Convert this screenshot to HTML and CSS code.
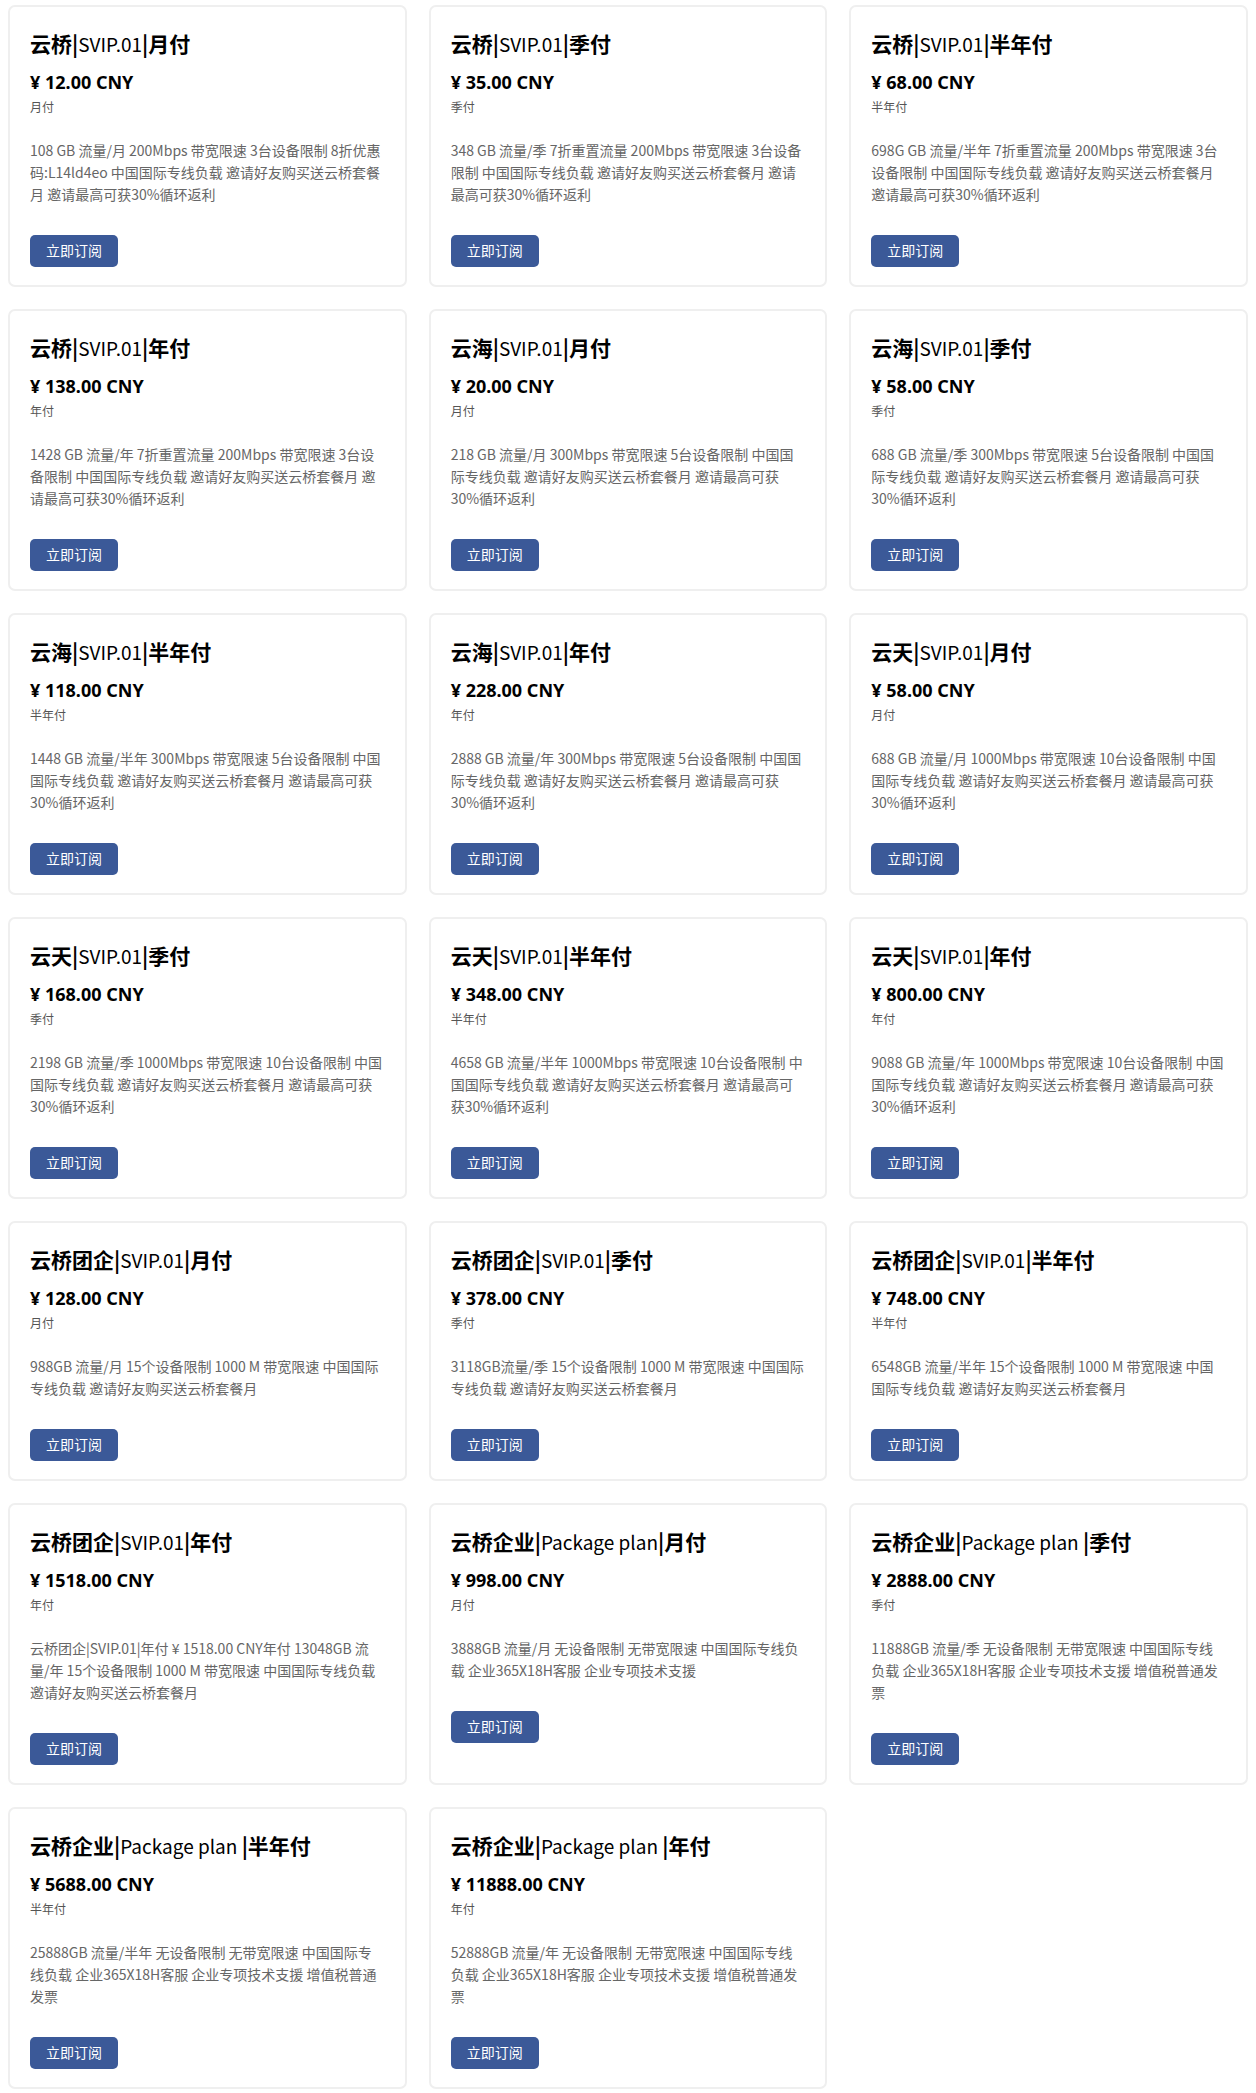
FILE: index.html
```html
<!DOCTYPE html>
<html lang="zh-CN">
<head>
<meta charset="utf-8">
<title>套餐</title>
<link rel="stylesheet" href="styles.css">
</head>
<body>
<main class="plans">
  <div class="card">
    <h3 class="card-title">云桥|<span class="plain">SVIP.01</span>|月付</h3>
    <div class="price">¥ 12.00 CNY</div>
    <div class="period">月付</div>
    <p class="desc">108 GB 流量/月 200Mbps 带宽限速 3台设备限制 8折优惠码:L14ld4eo 中国国际专线负载 邀请好友购买送云桥套餐月 邀请最高可获30%循环返利</p>
    <a class="btn">立即订阅</a>
  </div>
  <div class="card">
    <h3 class="card-title">云桥|<span class="plain">SVIP.01</span>|季付</h3>
    <div class="price">¥ 35.00 CNY</div>
    <div class="period">季付</div>
    <p class="desc">348 GB 流量/季 7折重置流量 200Mbps 带宽限速 3台设备限制 中国国际专线负载 邀请好友购买送云桥套餐月 邀请最高可获30%循环返利</p>
    <a class="btn">立即订阅</a>
  </div>
  <div class="card">
    <h3 class="card-title">云桥|<span class="plain">SVIP.01</span>|半年付</h3>
    <div class="price">¥ 68.00 CNY</div>
    <div class="period">半年付</div>
    <p class="desc">698G GB 流量/半年 7折重置流量 200Mbps 带宽限速 3台设备限制 中国国际专线负载 邀请好友购买送云桥套餐月 邀请最高可获30%循环返利</p>
    <a class="btn">立即订阅</a>
  </div>
  <div class="card">
    <h3 class="card-title">云桥|<span class="plain">SVIP.01</span>|年付</h3>
    <div class="price">¥ 138.00 CNY</div>
    <div class="period">年付</div>
    <p class="desc">1428 GB 流量/年 7折重置流量 200Mbps 带宽限速 3台设备限制 中国国际专线负载 邀请好友购买送云桥套餐月 邀请最高可获30%循环返利</p>
    <a class="btn">立即订阅</a>
  </div>
  <div class="card">
    <h3 class="card-title">云海|<span class="plain">SVIP.01</span>|月付</h3>
    <div class="price">¥ 20.00 CNY</div>
    <div class="period">月付</div>
    <p class="desc">218 GB 流量/月 300Mbps 带宽限速 5台设备限制 中国国际专线负载 邀请好友购买送云桥套餐月 邀请最高可获30%循环返利</p>
    <a class="btn">立即订阅</a>
  </div>
  <div class="card">
    <h3 class="card-title">云海|<span class="plain">SVIP.01</span>|季付</h3>
    <div class="price">¥ 58.00 CNY</div>
    <div class="period">季付</div>
    <p class="desc">688 GB 流量/季 300Mbps 带宽限速 5台设备限制 中国国际专线负载 邀请好友购买送云桥套餐月 邀请最高可获30%循环返利</p>
    <a class="btn">立即订阅</a>
  </div>
  <div class="card">
    <h3 class="card-title">云海|<span class="plain">SVIP.01</span>|半年付</h3>
    <div class="price">¥ 118.00 CNY</div>
    <div class="period">半年付</div>
    <p class="desc">1448 GB 流量/半年 300Mbps 带宽限速 5台设备限制 中国国际专线负载 邀请好友购买送云桥套餐月 邀请最高可获30%循环返利</p>
    <a class="btn">立即订阅</a>
  </div>
  <div class="card">
    <h3 class="card-title">云海|<span class="plain">SVIP.01</span>|年付</h3>
    <div class="price">¥ 228.00 CNY</div>
    <div class="period">年付</div>
    <p class="desc">2888 GB 流量/年 300Mbps 带宽限速 5台设备限制 中国国际专线负载 邀请好友购买送云桥套餐月 邀请最高可获30%循环返利</p>
    <a class="btn">立即订阅</a>
  </div>
  <div class="card">
    <h3 class="card-title">云天|<span class="plain">SVIP.01</span>|月付</h3>
    <div class="price">¥ 58.00 CNY</div>
    <div class="period">月付</div>
    <p class="desc">688 GB 流量/月 1000Mbps 带宽限速 10台设备限制 中国国际专线负载 邀请好友购买送云桥套餐月 邀请最高可获30%循环返利</p>
    <a class="btn">立即订阅</a>
  </div>
  <div class="card">
    <h3 class="card-title">云天|<span class="plain">SVIP.01</span>|季付</h3>
    <div class="price">¥ 168.00 CNY</div>
    <div class="period">季付</div>
    <p class="desc">2198 GB 流量/季 1000Mbps 带宽限速 10台设备限制 中国国际专线负载 邀请好友购买送云桥套餐月 邀请最高可获30%循环返利</p>
    <a class="btn">立即订阅</a>
  </div>
  <div class="card">
    <h3 class="card-title">云天|<span class="plain">SVIP.01</span>|半年付</h3>
    <div class="price">¥ 348.00 CNY</div>
    <div class="period">半年付</div>
    <p class="desc">4658 GB 流量/半年 1000Mbps 带宽限速 10台设备限制 中国国际专线负载 邀请好友购买送云桥套餐月 邀请最高可获30%循环返利</p>
    <a class="btn">立即订阅</a>
  </div>
  <div class="card">
    <h3 class="card-title">云天|<span class="plain">SVIP.01</span>|年付</h3>
    <div class="price">¥ 800.00 CNY</div>
    <div class="period">年付</div>
    <p class="desc">9088 GB 流量/年 1000Mbps 带宽限速 10台设备限制 中国国际专线负载 邀请好友购买送云桥套餐月 邀请最高可获30%循环返利</p>
    <a class="btn">立即订阅</a>
  </div>
  <div class="card">
    <h3 class="card-title">云桥团企|<span class="plain">SVIP.01</span>|月付</h3>
    <div class="price">¥ 128.00 CNY</div>
    <div class="period">月付</div>
    <p class="desc">988GB 流量/月 15个设备限制 1000 M 带宽限速 中国国际专线负载 邀请好友购买送云桥套餐月</p>
    <a class="btn">立即订阅</a>
  </div>
  <div class="card">
    <h3 class="card-title">云桥团企|<span class="plain">SVIP.01</span>|季付</h3>
    <div class="price">¥ 378.00 CNY</div>
    <div class="period">季付</div>
    <p class="desc">3118GB流量/季 15个设备限制 1000 M 带宽限速 中国国际专线负载 邀请好友购买送云桥套餐月</p>
    <a class="btn">立即订阅</a>
  </div>
  <div class="card">
    <h3 class="card-title">云桥团企|<span class="plain">SVIP.01</span>|半年付</h3>
    <div class="price">¥ 748.00 CNY</div>
    <div class="period">半年付</div>
    <p class="desc">6548GB 流量/半年 15个设备限制 1000 M 带宽限速 中国国际专线负载 邀请好友购买送云桥套餐月</p>
    <a class="btn">立即订阅</a>
  </div>
  <div class="card">
    <h3 class="card-title">云桥团企|<span class="plain">SVIP.01</span>|年付</h3>
    <div class="price">¥ 1518.00 CNY</div>
    <div class="period">年付</div>
    <p class="desc">云桥团企|SVIP.01|年付 ¥ 1518.00 CNY年付 13048GB 流量/年 15个设备限制 1000 M 带宽限速 中国国际专线负载 邀请好友购买送云桥套餐月</p>
    <a class="btn">立即订阅</a>
  </div>
  <div class="card">
    <h3 class="card-title">云桥企业|<span class="plain">Package plan</span>|月付</h3>
    <div class="price">¥ 998.00 CNY</div>
    <div class="period">月付</div>
    <p class="desc">3888GB 流量/月 无设备限制 无带宽限速 中国国际专线负载 企业365X18H客服 企业专项技术支援</p>
    <a class="btn">立即订阅</a>
  </div>
  <div class="card">
    <h3 class="card-title">云桥企业|<span class="plain">Package plan </span>|季付</h3>
    <div class="price">¥ 2888.00 CNY</div>
    <div class="period">季付</div>
    <p class="desc">11888GB 流量/季 无设备限制 无带宽限速 中国国际专线负载 企业365X18H客服 企业专项技术支援 增值税普通发票</p>
    <a class="btn">立即订阅</a>
  </div>
  <div class="card">
    <h3 class="card-title">云桥企业|<span class="plain">Package plan </span>|半年付</h3>
    <div class="price">¥ 5688.00 CNY</div>
    <div class="period">半年付</div>
    <p class="desc">25888GB 流量/半年 无设备限制 无带宽限速 中国国际专线负载 企业365X18H客服 企业专项技术支援 增值税普通发票</p>
    <a class="btn">立即订阅</a>
  </div>
  <div class="card">
    <h3 class="card-title">云桥企业|<span class="plain">Package plan </span>|年付</h3>
    <div class="price">¥ 11888.00 CNY</div>
    <div class="period">年付</div>
    <p class="desc">52888GB 流量/年 无设备限制 无带宽限速 中国国际专线负载 企业365X18H客服 企业专项技术支援 增值税普通发票</p>
    <a class="btn">立即订阅</a>
  </div>
</main>
</body>
</html>
```

FILE: styles.css
```css
* {
  box-sizing: border-box;
}

html, body {
  margin: 0;
  padding: 0;
  background: #ffffff;
}

body {
  font-family: "Noto Sans", "Noto Sans CJK SC", sans-serif;
  color: #000;
}

.plans {
  display: grid;
  grid-template-columns: repeat(3, 1fr);
  gap: 22px;
  padding: 5px 8px 4px 8px;
}

.card {
  background: #fff;
  border: 2px solid #efefef;
  border-radius: 7px;
  padding: 21px 20px 18px 20px;
}

.card-title {
  margin: 0;
  font-family: "Noto Sans CJK SC", sans-serif;
  font-size: 21px;
  line-height: 30px;
  font-weight: 700;
  color: #000;
}

.card-title .plain {
  font-size: 19px;
  line-height: 1;
  font-weight: 400;
}

.price {
  margin-top: 12px;
  font-size: 18px;
  line-height: 24px;
  font-weight: 700;
  color: #000;
}

.period {
  margin-top: 5px;
  font-size: 12px;
  line-height: 18px;
  color: #555;
}

.desc {
  margin: 22px 0 0 0;
  font-family: "Noto Sans CJK SC", sans-serif;
  font-size: 14px;
  line-height: 22px;
  color: #666;
}

.btn {
  display: inline-block;
  margin-top: 30px;
  height: 32px;
  padding: 0 16px;
  border-radius: 5px;
  background: #3b5998;
  color: #fff;
  font-size: 14px;
  line-height: 32px;
  text-decoration: none;
  cursor: pointer;
}
```
